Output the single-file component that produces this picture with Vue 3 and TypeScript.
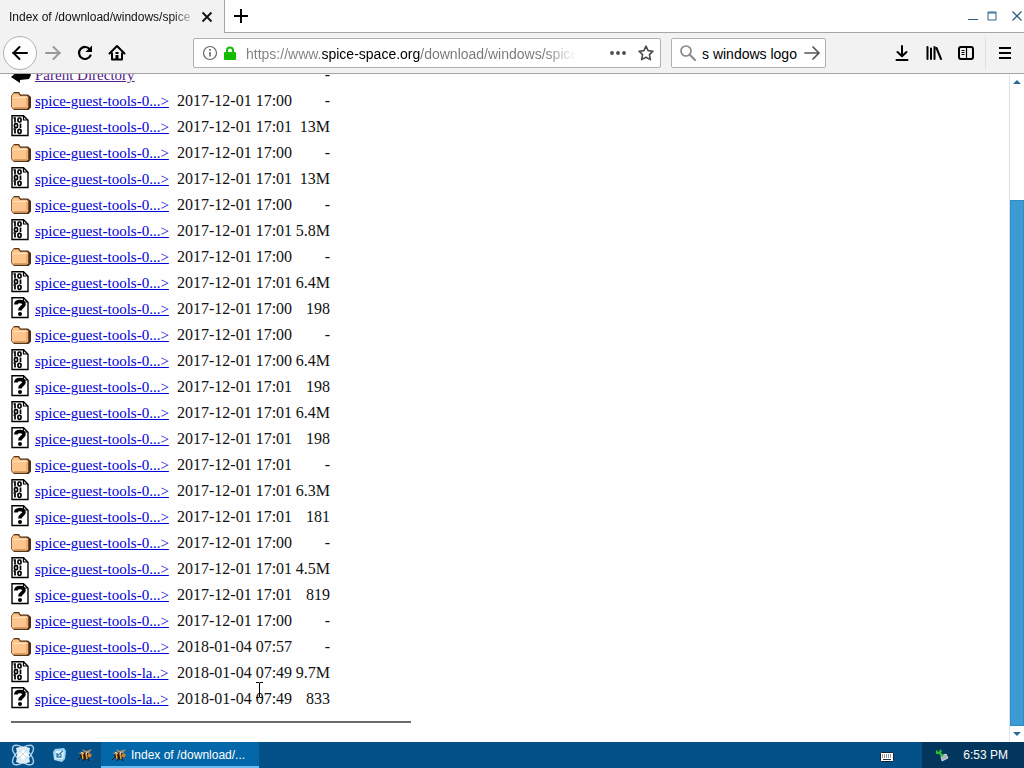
<script setup lang="ts">
import { ref } from 'vue'

type Kind = 'folder' | 'binary' | 'unknown' | 'back'
interface Entry { kind: Kind; name: string; date: string; size: string }

const f = 'spice-guest-tools-0...>'
const la = 'spice-guest-tools-la..>'
const d0 = '2017-12-01 17:00'
const d1 = '2017-12-01 17:01'

const entries: Entry[] = [
  { kind: 'back', name: 'Parent Directory', date: '', size: '-' },
  { kind: 'folder', name: f, date: d0, size: '-' },
  { kind: 'binary', name: f, date: d1, size: '13M' },
  { kind: 'folder', name: f, date: d0, size: '-' },
  { kind: 'binary', name: f, date: d1, size: '13M' },
  { kind: 'folder', name: f, date: d0, size: '-' },
  { kind: 'binary', name: f, date: d1, size: '5.8M' },
  { kind: 'folder', name: f, date: d0, size: '-' },
  { kind: 'binary', name: f, date: d1, size: '6.4M' },
  { kind: 'unknown', name: f, date: d0, size: '198' },
  { kind: 'folder', name: f, date: d0, size: '-' },
  { kind: 'binary', name: f, date: d0, size: '6.4M' },
  { kind: 'unknown', name: f, date: d1, size: '198' },
  { kind: 'binary', name: f, date: d1, size: '6.4M' },
  { kind: 'unknown', name: f, date: d1, size: '198' },
  { kind: 'folder', name: f, date: d1, size: '-' },
  { kind: 'binary', name: f, date: d1, size: '6.3M' },
  { kind: 'unknown', name: f, date: d1, size: '181' },
  { kind: 'folder', name: f, date: d0, size: '-' },
  { kind: 'binary', name: f, date: d1, size: '4.5M' },
  { kind: 'unknown', name: f, date: d1, size: '819' },
  { kind: 'folder', name: f, date: d0, size: '-' },
  { kind: 'folder', name: f, date: '2018-01-04 07:57', size: '-' },
  { kind: 'binary', name: la, date: '2018-01-04 07:49', size: '9.7M' },
  { kind: 'unknown', name: la, date: '2018-01-04 07:49', size: '833' },
]

const url = ref('https://www.spice-space.org/download/windows/spice')
const query = ref('s windows logo')
</script>

<template>
  <div class="desktop">
    <svg class="defs" aria-hidden="true">
      <symbol id="bee" viewBox="0 0 16 14">
        <path d="M1 5 L7 4 L5 1 L9 3 L15 1 L12 5 L15 7 L10 8Z" fill="#a8926f" />
        <ellipse cx="8" cy="8" rx="5" ry="3.5" fill="#20150d" />
        <path d="M5 5 L6 11 M9 5 L10 11" stroke="#e6a03a" stroke-width="1.6" />
        <circle cx="12.5" cy="7.5" r="2" fill="#c98231" />
        <path d="M3 10 L1 12 M7 11 L6 13 M11 11 L12 13" stroke="#17100b" />
        <path d="M4 4 L7 6 M10 4 L9 6" stroke="#f3e6cb" />
      </symbol>
    </svg>

    <header class="titlebar">
      <div class="tab">
        <span class="tab-title">Index of /download/windows/spice</span>
        <button class="tab-close" aria-label="Close tab">
          <svg width="12" height="12" viewBox="0 0 12 12"><path d="M1.5 1.5 L10.5 10.5 M10.5 1.5 L1.5 10.5" stroke="#111" stroke-width="1.8" /></svg>
        </button>
      </div>
      <button class="new-tab" aria-label="New tab">
        <svg width="14" height="14" viewBox="0 0 14 14"><path d="M7 0 V14 M0 7 H14" stroke="#000" stroke-width="2" /></svg>
      </button>
      <div class="window-buttons">
        <button aria-label="Minimize"><svg width="10" height="10" viewBox="0 0 10 10"><path d="M0 8.5 H10" stroke="#2d6184" /></svg></button>
        <button aria-label="Maximize"><svg width="10" height="10" viewBox="0 0 10 10"><path d="M1 1 H9 V9 H1Z M1 2 H9" fill="none" stroke="#2d6184" /></svg></button>
        <button class="win-close" aria-label="Close"><svg width="10" height="10" viewBox="0 0 10 10"><path d="M.5 .5 L9.5 9.5 M9.5 .5 L.5 9.5" stroke="#2d6184" stroke-width="1.3" /></svg></button>
      </div>
    </header>

    <nav class="toolbar">
      <button class="nav back" aria-label="Back">
        <svg width="18" height="18" viewBox="0 0 18 18"><path d="M2 9 H16 M8.5 3 L2.5 9 L8.5 15" fill="none" stroke="#000" stroke-width="2" stroke-linecap="round" stroke-linejoin="round" /></svg>
      </button>
      <button class="nav" aria-label="Forward">
        <svg width="18" height="18" viewBox="0 0 18 18"><path d="M2 9 H16 M9.5 3 L15.5 9 L9.5 15" fill="none" stroke="#999" stroke-width="2" stroke-linecap="round" stroke-linejoin="round" /></svg>
      </button>
      <button class="nav" aria-label="Reload">
        <svg width="18" height="18" viewBox="0 0 18 18"><path d="M13.8 5.3 A6 6 0 1 0 14.5 11.5" fill="none" stroke="#000" stroke-width="2.2" stroke-linecap="round" /><path d="M16 1.5 V8 H9.5Z" fill="#000" /></svg>
      </button>
      <button class="nav" aria-label="Home">
        <svg width="18" height="18" viewBox="0 0 18 18"><path d="M1.5 9.5 L9 2 L16.5 9.5" fill="none" stroke="#000" stroke-width="2" stroke-linecap="round" stroke-linejoin="round" /><path d="M4 8.5 V15.5 H14 V8.5" fill="none" stroke="#000" stroke-width="2" stroke-linejoin="round" /><path d="M7.5 8 H10.5 V10 H7.5Z M7.5 11 H10.5 V15 H7.5Z" fill="#000" /></svg>
      </button>

      <div class="urlbar">
        <svg width="16" height="16" viewBox="0 0 16 16"><circle cx="8" cy="8" r="6.5" fill="none" stroke="#666" stroke-width="1.2" /><path d="M8 7 V11.5 M8 4 V5.7" stroke="#666" stroke-width="1.6" /></svg>
        <svg class="lock" width="12" height="14" viewBox="0 0 12 14"><path d="M3 7 V4.5 a3 3 0 0 1 6 0 V7" fill="none" stroke="#12bc00" stroke-width="2" /><rect x="0" y="6" width="12" height="8" rx="1" fill="#12bc00" /></svg>
        <input v-model="url" class="url" type="text" aria-label="Address" spellcheck="false" />
        <button class="plain" aria-label="Page actions">
          <svg width="16" height="4" viewBox="0 0 16 4"><circle cx="2" cy="2" r="1.9" fill="#4b4b4b" /><circle cx="8" cy="2" r="1.9" fill="#4b4b4b" /><circle cx="14" cy="2" r="1.9" fill="#4b4b4b" /></svg>
        </button>
        <button class="plain" aria-label="Bookmark this page">
          <svg width="16" height="16" viewBox="0 0 16 16"><path d="M8 1.2 L10.1 5.6 L15 6.2 L11.4 9.6 L12.4 14.6 L8 12.2 L3.6 14.6 L4.6 9.6 L1 6.2 L5.9 5.6Z" fill="none" stroke="#4b4b4b" stroke-width="1.6" stroke-linejoin="round" /></svg>
        </button>
      </div>

      <div class="searchbar">
        <svg width="16" height="16" viewBox="0 0 16 16"><circle cx="6" cy="6" r="5" fill="none" stroke="#888" stroke-width="1.7" /><path d="M9.8 9.8 L15 15" stroke="#888" stroke-width="2" stroke-linecap="round" /></svg>
        <input v-model="query" class="query" type="text" aria-label="Search" spellcheck="false" />
        <button class="plain" aria-label="Go">
          <svg width="16" height="14" viewBox="0 0 16 14"><path d="M1 7 H15 M9 1 L15 7 L9 13" fill="none" stroke="#555" stroke-width="1.7" stroke-linecap="round" stroke-linejoin="round" /></svg>
        </button>
      </div>

      <div class="tools">
        <button class="plain" aria-label="Downloads">
          <svg width="16" height="16" viewBox="0 0 16 16"><path d="M8 1 V11 M3.5 7 L8 11.3 L12.5 7 M2.5 15 H13.5" fill="none" stroke="#000" stroke-width="2" stroke-linecap="round" stroke-linejoin="round" /></svg>
        </button>
        <button class="plain" aria-label="Library">
          <svg width="16" height="16" viewBox="0 0 16 16"><path d="M1.5 2 V14 M5 3.5 V14 M8.5 2 V14 M10.5 3 L15 14" fill="none" stroke="#000" stroke-width="2" stroke-linecap="round" /></svg>
        </button>
        <button class="plain" aria-label="Sidebars">
          <svg width="16" height="16" viewBox="0 0 16 16"><rect x="1" y="2" width="14" height="12" rx="2" fill="none" stroke="#000" stroke-width="2" /><path d="M8.5 2 V14" stroke="#000" stroke-width="1.2" /><path d="M3.5 5.5 H6.5 M3.5 7.5 H6.5 M3.5 9.5 H6.5" stroke="#000" /></svg>
        </button>
      </div>
      <button class="plain menu" aria-label="Menu">
        <svg width="12" height="12" viewBox="0 0 12 12"><path d="M0 1 H12 M0 6 H12 M0 11 H12" stroke="#000" stroke-width="2" /></svg>
      </button>
    </nav>

    <div class="viewport">
      <main class="page">
        <table class="listing" aria-label="Directory listing">
          <tbody>
            <tr v-for="(e, i) in entries" :key="i">
              <td class="icon">
                <svg v-if="e.kind === 'folder'" width="20" height="22" viewBox="0 0 20 22">
                  <path d="M1.5 6 L3 3 H8 L9.5 5.5 H17 L20 8 V18.5 L17.5 21 H3 L1 18.5Z" fill="#4a2c12" />
                  <path d="M.5 7 L2.5 4 H7.5 L9 6.5 H16 L17.5 8 V18.5 L16 20 H2.5 L.5 18Z" fill="#fdc48c" stroke="#6d4521" stroke-width=".8" />
                  <path d="M2.5 8.5 H15.5" stroke="#ffe6ca" />
                  <path d="M3 18.5 H16 V9" fill="none" stroke="#dc9860" />
                </svg>
                <svg v-else-if="e.kind === 'back'" width="20" height="22" viewBox="0 0 20 22">
                  <path d="M0 14 L8 7 V10 L18 9 L20 12 L18 16 L9 17 V20Z" fill="#000" />
                </svg>
                <svg v-else width="20" height="22" viewBox="0 0 20 22">
                  <path d="M1 .7 H12.5 L17 5.2 V20.5 H1Z" fill="#fff" stroke="#000" stroke-width="1.4" />
                  <path d="M12.5 1 V5 H17" fill="none" stroke="#000" stroke-width="1.2" />
                  <g v-if="e.kind === 'binary'" fill="none" stroke="#000" stroke-width="1.7">
                    <path d="M2.5 3 H4 V7.5 M9.5 8.5 V13 M2.5 14 H4 V18.5" />
                    <rect x="7" y="3" width="3" height="4" rx="1.2" />
                    <rect x="3.5" y="8.7" width="3" height="4" rx="1.2" />
                    <rect x="7" y="14.3" width="3" height="4" rx="1.2" />
                  </g>
                  <g v-else>
                    <path d="M4.8 7.5 C5 3.6 13 3.4 13 7.2 C13 10 9 9.5 9 13.5" fill="none" stroke="#000" stroke-width="3.6" />
                    <circle cx="9" cy="17" r="2" fill="#000" />
                  </g>
                </svg>
              </td>
              <td class="name"><a href="#" :class="{ visited: e.kind === 'back' }">{{ e.name }}</a></td>
              <td class="date">{{ e.date }}</td>
              <td class="size">{{ e.size }}</td>
            </tr>
          </tbody>
        </table>
        <hr />
      </main>
      <div class="scrollbar">
        <button aria-label="Scroll up"><svg width="8" height="4" viewBox="0 0 8 4"><path d="M0 4 L4 0 L8 4Z" fill="#286b9c" /></svg></button>
        <div class="track"></div>
        <div class="thumb"></div>
        <button aria-label="Scroll down"><svg width="8" height="4" viewBox="0 0 8 4"><path d="M0 0 L4 4 L8 0Z" fill="#286b9c" /></svg></button>
      </div>
    </div>

    <footer class="taskbar">
      <button class="start" aria-label="Start">
        <svg width="24" height="22" viewBox="0 0 24 22">
          <g fill="none" stroke="#a9d0ea" stroke-width="1.4">
            <ellipse cx="12" cy="11" rx="13" ry="6" transform="rotate(42 12 11)" />
            <ellipse cx="12" cy="11" rx="13" ry="6" transform="rotate(-42 12 11)" />
          </g>
          <path d="M5 4 Q12 1 19 4 Q17 11 19 18 Q12 21 5 18 Q7 11 5 4Z" fill="#dcecf6" />
          <path d="M7 11 L12 6 L17 11 L12 16Z" fill="#fff" />
          <path d="M8 6 L17 15 M16 6 L7 15" stroke="#a8c6da" stroke-width=".7" />
        </svg>
      </button>
      <button class="quick" aria-label="Show desktop">
        <svg width="14" height="14" viewBox="0 0 14 14"><path d="M2 1 L11 0 L13 3 L12 11 L9 14 L1 12 L0 4Z" fill="#9ed6f2" /><path d="M3 3 H11 L10 11 H2Z" fill="#dff4ff" /><path d="M4 8 L10 3 M4 5 V9 H8 V6" fill="none" stroke="#2f7ba8" stroke-width="1.3" /></svg>
      </button>
      <button class="quick bee" aria-label="Browser"><svg width="16" height="14"><use href="#bee" /></svg></button>
      <button class="task">
        <svg width="16" height="14"><use href="#bee" /></svg>
        <span>Index of /download/...</span>
      </button>
      <button class="keyboard" aria-label="Keyboard">
        <svg width="14" height="10" viewBox="0 0 14 10"><rect x=".5" y=".5" width="13" height="9" rx="1" fill="#fff" stroke="#102537" /><path d="M2 3 H12 M2 5 H12" stroke="#223240" stroke-width="1.2" stroke-dasharray="1 1" /><path d="M3 7.5 H11" stroke="#223240" /></svg>
      </button>
      <div class="tray">
        <svg width="14" height="14" viewBox="0 0 14 14"><path d="M6 8 L11 6 L13 10 L7 13Z" fill="#a6b4bd" stroke="#e4e8eb" stroke-width=".8" /><path d="M1 2 L4 4 L5 1 L7 3 L6 5 L9 7 L7 9 L4 6 L1 6Z" fill="#2fbd38" /></svg>
        <time>6:53 PM</time>
      </div>
    </footer>

    <svg class="pointer" width="9" height="18" viewBox="0 0 9 18" aria-hidden="true"><path d="M1 1.5 H4 L4.5 2 L5 1.5 H8 M4.5 2 V16 M1 16.5 H4 L4.5 16 L5 16.5 H8" fill="none" stroke="#000" /></svg>
  </div>
</template>

<style>
body { margin: 0; overflow: hidden; }
</style>

<style scoped>
.desktop {
  position: relative;
  display: flex;
  flex-direction: column;
  height: 100vh;
  background: #fefefe;
  font-family: "Liberation Sans", Arial, sans-serif;
  font-size: 12px;
  color: #111;
}
.defs { position: absolute; width: 0; height: 0; }
* { box-sizing: border-box; }
svg { display: block; flex: none; }
button {
  display: flex;
  align-items: center;
  justify-content: center;
  flex: none;
  padding: 0;
  border: 0;
  background: none;
  font: inherit;
  color: inherit;
}
input { min-width: 0; padding: 0; border: 0; outline: 0; background: none; font: inherit; }

.titlebar { display: flex; flex: none; height: 33px; border-bottom: 1px solid #a5a5a5; background: #fefefe; }
.tab {
  display: flex;
  align-items: center;
  gap: 4px;
  width: 225px;
  height: 33px;
  padding: 0 10px 0 9px;
  border-right: 1px solid #a5a5a5;
  background: #f2f2f2;
}
.tab-title {
  flex: 1;
  overflow: hidden;
  line-height: 34px;
  white-space: nowrap;
  mask-image: linear-gradient(to right, #000 calc(100% - 24px), transparent);
}
.tab-close { width: 14px; height: 32px; }
.new-tab { width: 32px; height: 32px; }
.window-buttons { display: flex; align-items: center; gap: 9px; margin-left: auto; padding-right: 2px; }
.win-close { margin-left: 6px; }

.toolbar {
  display: flex;
  align-items: center;
  flex: none;
  height: 41px;
  padding: 0 13px 0 3px;
  border-bottom: 1px solid #a5a5a5;
  background: #f2f2f2;
}
.nav { width: 32px; height: 32px; }
.back { width: 34px; height: 34px; border: 1px solid #b2b2b2; border-radius: 50%; background: #fdfdfd; }
.urlbar, .searchbar {
  display: flex;
  align-items: center;
  height: 30px;
  border: 1px solid #b0b0b0;
  border-radius: 2px;
  background: #fff;
  font-size: 14px;
}
.urlbar { flex: 1; margin-left: 60px; padding: 0 6px 0 8px; gap: 6px; }
.lock { margin-right: 4px; }
.url {
  flex: 1;
  height: 28px;
  margin-right: 28px;
  padding-top: 2px;
  color: transparent;
  background: linear-gradient(to right, #808080 75px, #000 75px, #000 174px, #777 174px, #777 calc(100% - 30px), transparent);
  background-clip: text;
  -webkit-background-clip: text;
}
.urlbar .plain + .plain { margin-left: 6px; }
.searchbar { width: 155px; margin-left: 10px; padding: 0 5px 0 8px; gap: 6px; }
.query { flex: 1; height: 28px; padding-top: 2px; color: #000; }
.tools { display: flex; gap: 16px; margin-left: 68px; padding-right: 11px; border-right: 1px solid #ddd; }
.tools .plain { height: 32px; }
.menu { margin-left: 13px; height: 32px; }

.viewport { display: flex; flex: 1; min-height: 0; }
.page { flex: 1; min-width: 0; overflow: hidden; padding-left: 11px; }
.listing {
  margin-top: -12px;
  border-collapse: collapse;
  font-family: "Liberation Serif", "Times New Roman", serif;
  font-size: 16px;
  line-height: 24px;
  white-space: nowrap;
}
.listing tr { height: 26px; }
.listing td { padding: 0; }
.listing .icon { width: 24px; padding-bottom: 2px; }
.listing .name { width: 142px; font-size: 15px; }
.listing .date { width: 116px; }
.listing .size { width: 37px; text-align: right; }
a { color: #0000d8; text-decoration: underline; }
a.visited { color: #551a8b; }
hr { width: 400px; height: 2px; margin: 9px 0 0; border: 0; background: #6b6b6b; }

.scrollbar { display: flex; flex-direction: column; flex: none; width: 15px; border-left: 1px solid #d6e4ec; background: #fff; }
.scrollbar button { height: 16px; }
.track { flex: 110; }
.thumb { flex: 526; background: #3c9ad5; border: 1px solid #318bc4; }

.taskbar { display: flex; flex: none; height: 26px; background: #045088; color: #fff; }
.start { width: 46px; }
.quick { width: 27px; }
.bee { width: 24px; }
.task { justify-content: flex-start; gap: 4px; width: 158px; margin-left: 4px; padding: 2px 0 0 10px; border-bottom: 2px solid #69bdf5; background: #0367a9; }
.keyboard { margin-left: auto; margin-right: 28px; padding-top: 4px; }
.tray { display: flex; align-items: center; gap: 14px; padding: 0 16px 0 13px; background: #03365c; }
.pointer { position: absolute; left: 255px; top: 681px; }
</style>
